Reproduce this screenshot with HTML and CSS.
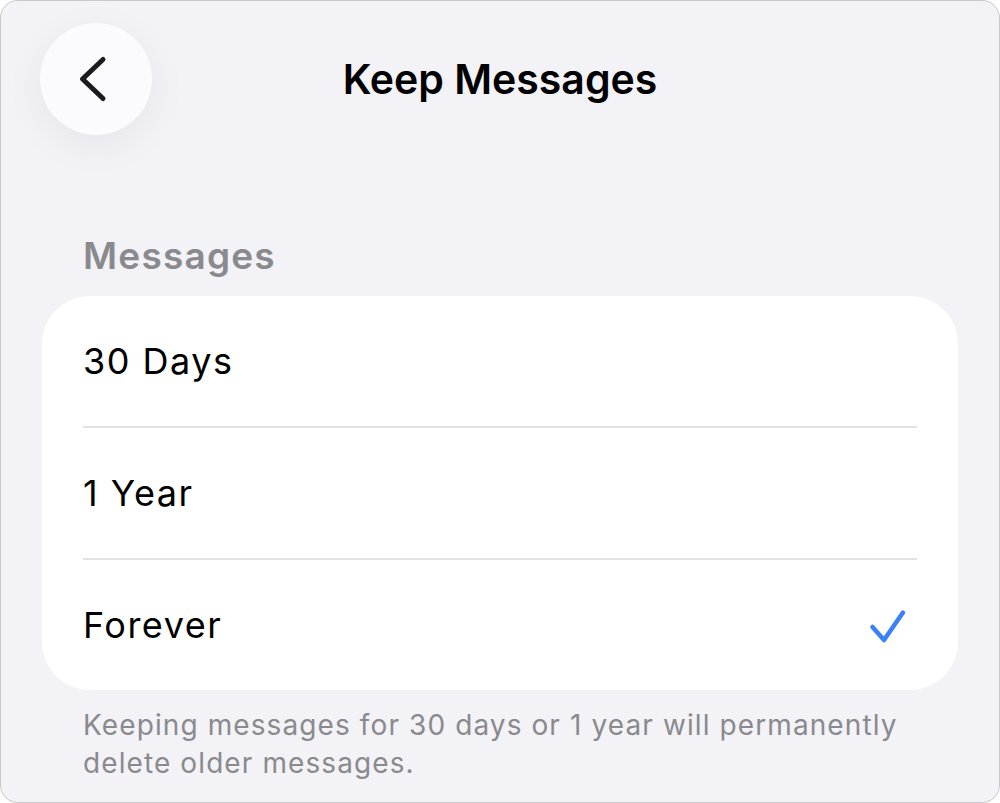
FILE: index.html
```html
<!DOCTYPE html>
<html lang="en">
<head>
    <meta charset="UTF-8">
    <meta name="viewport" content="width=device-width, initial-scale=1.0">
    <title>Keep Messages</title>
    <link rel="stylesheet" href="styles.css">
</head>
<body>
    <div class="screen">
        <header class="navBar">
            <button class="backButton" aria-label="Back">
                <svg width="40" height="52" viewBox="0 0 40 52">
                    <path d="M31 6.5 L10.5 26 L31 45.5" fill="none" stroke="#1c1c1e" stroke-width="5" stroke-linecap="round" stroke-linejoin="round"/>
                </svg>
            </button>
            <h1 class="title">Keep Messages</h1>
            <span></span>
        </header>

        <h2 class="sectionLabel">Messages</h2>
        <ul class="optionList">
            <li class="option">30 Days</li>
            <li class="option">1 Year</li>
            <li class="option selected">
                Forever
                <svg class="check" width="40" height="40" viewBox="0 0 40 40">
                    <path d="M3.5 22 L15 35 L34 7.5" fill="none" stroke="#3a80f6" stroke-width="4.5" stroke-linecap="round" stroke-linejoin="round"/>
                </svg>
            </li>
        </ul>
        <p class="footnote">Keeping messages for 30 days or 1 year will permanently delete older messages.</p>
    </div>
</body>
</html>
```

FILE: styles.css
```css
body {
    margin: 0;
    background-color: #ffffff;
    font-family: Inter, "Noto Sans", sans-serif;
}
.screen {
    box-sizing: border-box;
    width: 1000px;
    height: 803px;
    background-color: #f2f2f7;
    border: 1.5px solid #c7c7cc;
    border-radius: 18px;
    overflow: hidden;
}
.navBar {
    display: grid;
    grid-template-columns: 112px 1fr 112px;
    align-items: center;
    padding: 22px 39px 0;
}
.backButton {
    width: 112px;
    height: 112px;
    border: none;
    border-radius: 50%;
    background-color: #fbfbfd;
    box-shadow: 0 10px 40px rgba(0, 0, 0, 0.06);
    display: flex;
    align-items: center;
    justify-content: center;
    padding: 0 8px 0 0;
}
.title {
    margin: 0;
    text-align: center;
    font-size: 41px;
    font-weight: 600;
    color: #000000;
}
.sectionLabel {
    margin: 99px 0 0 82px;
    font-size: 37px;
    line-height: 44px;
    font-weight: 600;
    letter-spacing: 1.2px;
    color: #8a8a8e;
}
.optionList {
    list-style: none;
    margin: 18px 41px 0;
    padding: 0;
    background-color: #ffffff;
    border-radius: 48px;
}
.option {
    display: flex;
    align-items: center;
    justify-content: space-between;
    height: 130px;
    margin: 0 41px;
    font-size: 36px;
    letter-spacing: 1.5px;
    color: #000000;
    border-bottom: 2px solid #e2e2e6;
}
.option:last-child {
    border-bottom: none;
}
.check {
    margin-right: 8px;
}
.footnote {
    margin: 16px 82px 0;
    font-size: 28px;
    line-height: 38px;
    letter-spacing: 1.1px;
    color: #8a8a8e;
}
```
